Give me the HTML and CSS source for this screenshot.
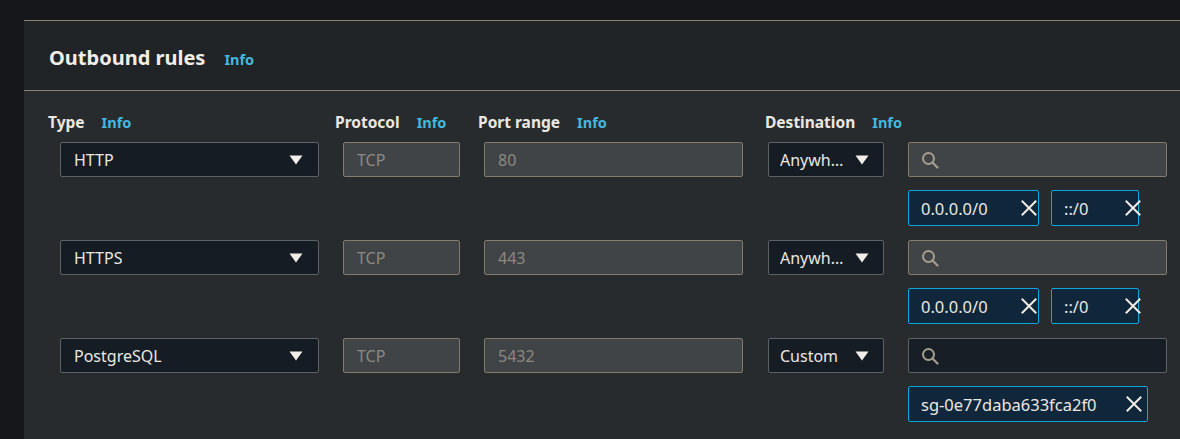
FILE: index.html
```html
<!DOCTYPE html>
<html lang="en">
<head>
<meta charset="utf-8">
<title>Outbound rules</title>
<link rel="stylesheet" href="styles.css">
</head>
<body>
<svg width="0" height="0" class="defs" aria-hidden="true">
  <defs>
    <symbol id="caret" viewBox="0 0 14 10"><path d="M0.5 0.5 H13.5 L7 9.5 Z" fill="currentColor"/></symbol>
    <symbol id="search" viewBox="0 0 18 18"><circle cx="7.5" cy="7.5" r="5.5" fill="none" stroke="currentColor" stroke-width="2"/><path d="M11.5 11.5 L16.5 16.5" stroke="currentColor" stroke-width="2.2" stroke-linecap="round"/></symbol>
    <symbol id="close" viewBox="0 0 16 16"><path d="M1.5 1.5 L14.5 14.5 M14.5 1.5 L1.5 14.5" stroke="currentColor" stroke-width="2" stroke-linecap="square"/></symbol>
  </defs>
</svg>
<div class="page">
  <section class="panel">
    <header class="panel-header">
      <h2 class="panel-title">Outbound rules</h2>
      <a class="info info-title">Info</a>
    </header>
    <div class="panel-body">
      <div class="labels">
        <div class="label">Type <a class="info">Info</a></div>
        <div class="label">Protocol <a class="info">Info</a></div>
        <div class="label">Port range <a class="info">Info</a></div>
        <div class="label">Destination <a class="info">Info</a></div>
      </div>

      <div class="rule">
        <div class="select"><span class="select-text">HTTP</span><svg class="caret"><use href="#caret"/></svg></div>
        <div class="field disabled">TCP</div>
        <div class="field disabled">80</div>
        <div class="select select-dest"><span class="select-text">Anywh…</span><svg class="caret"><use href="#caret"/></svg></div>
        <div class="dest">
          <div class="search disabled"><svg class="search-icon"><use href="#search"/></svg></div>
          <div class="tokens">
            <div class="token token-v4"><span>0.0.0.0/0</span><svg class="x"><use href="#close"/></svg></div>
            <div class="token token-v6"><span>::/0</span><svg class="x"><use href="#close"/></svg></div>
          </div>
        </div>
      </div>

      <div class="rule">
        <div class="select"><span class="select-text">HTTPS</span><svg class="caret"><use href="#caret"/></svg></div>
        <div class="field disabled">TCP</div>
        <div class="field disabled">443</div>
        <div class="select select-dest"><span class="select-text">Anywh…</span><svg class="caret"><use href="#caret"/></svg></div>
        <div class="dest">
          <div class="search disabled"><svg class="search-icon"><use href="#search"/></svg></div>
          <div class="tokens">
            <div class="token token-v4"><span>0.0.0.0/0</span><svg class="x"><use href="#close"/></svg></div>
            <div class="token token-v6"><span>::/0</span><svg class="x"><use href="#close"/></svg></div>
          </div>
        </div>
      </div>

      <div class="rule">
        <div class="select"><span class="select-text">PostgreSQL</span><svg class="caret"><use href="#caret"/></svg></div>
        <div class="field disabled">TCP</div>
        <div class="field disabled">5432</div>
        <div class="select select-dest"><span class="select-text">Custom</span><svg class="caret"><use href="#caret"/></svg></div>
        <div class="dest">
          <div class="search"><svg class="search-icon"><use href="#search"/></svg></div>
          <div class="tokens">
            <div class="token token-sg"><span>sg-0e77daba633fca2f0</span><svg class="x"><use href="#close"/></svg></div>
          </div>
        </div>
      </div>
    </div>
  </section>
</div>
</body>
</html>
```

FILE: styles.css
```css
* { box-sizing: border-box; }

html, body {
  margin: 0;
  padding: 0;
  background: #16171b;
  overflow: hidden;
}

body {
  font-family: "Noto Sans", "Open Sans", sans-serif;
  font-size: 16px;
  color: #ebe8e3;
}

.defs { position: absolute; }

.page {
  padding: 20px 0 0 24px;
  height: 439px;
  overflow: hidden;
}

.panel {
  background: #282b2d;
  border-top: 1px solid #8b8274;
  height: 419px;
  overflow: hidden;
}

.panel-header {
  display: flex;
  align-items: baseline;
  height: 70px;
  padding: 23px 0 0 25px;
  background: #202427;
  border-bottom: 1px solid #8b8274;
}

.panel-title {
  margin: 0;
  font-size: 20px;
  line-height: 28px;
  font-weight: 700;
  color: #f1ede7;
}

.info {
  color: #44b8de;
  font-weight: 700;
  font-size: 14.5px;
  text-decoration: none;
}

.info-title { margin-left: 19px; }

.panel-body {
  padding: 20px 0 0 36px;
}

.labels {
  display: grid;
  grid-template-columns: 287px 143px 287px 1fr;
  margin-left: -12px;
  height: 22px;
  margin-bottom: 9px;
}

.label {
  font-weight: 700;
  font-size: 15.5px;
  line-height: 22px;
  color: #ebe8e3;
}

.label .info { margin-left: 13px; }

.rule {
  display: grid;
  grid-template-columns: 259px 117px 259px 117px 259px;
  column-gap: 24px;
  align-items: start;
  margin-bottom: 14px;
}

.select, .field, .search {
  height: 35px;
  border-radius: 2px;
  display: flex;
  align-items: center;
}

.select {
  background: #161c24;
  border: 1px solid #5f6264;
  padding: 1px 15px 0 13px;
  justify-content: space-between;
}

.select-dest {
  margin-left: 1px;
  padding: 1px 14px 0 11px;
}

.select-text {
  white-space: nowrap;
  overflow: hidden;
}

.caret {
  width: 14px;
  height: 10px;
  color: #f1eee9;
  flex: none;
  margin-top: -1px;
}

.field {
  border: 1px solid #847b6c;
  background: #404446;
  color: #8d8982;
  padding: 1px 13px 0;
}

.search {
  background: #181e25;
  border: 1px solid #5f6264;
  padding: 0 12px;
}

.search.disabled {
  background: #404446;
  border-color: #847b6c;
}

.search-icon {
  width: 18px;
  height: 18px;
  color: #a69d8f;
}

.tokens {
  display: flex;
  gap: 12px;
  margin-top: 13px;
}

.token {
  height: 36px;
  display: flex;
  align-items: center;
  justify-content: space-between;
  background: #10263a;
  border: 1px solid #0ba6dc;
  border-radius: 2px;
  padding: 0 1px 0 12px;
  white-space: nowrap;
  font-size: 16.5px;
}

.token-v4 { width: 131px; }
.token-v6 { width: 88px; padding-right: 0; }
.token-v6 .x { margin-right: -3px; }
.token-sg { width: 240px; padding-right: 5px; }

.x {
  width: 16px;
  height: 16px;
  color: #efebe6;
  flex: none;
}
```
